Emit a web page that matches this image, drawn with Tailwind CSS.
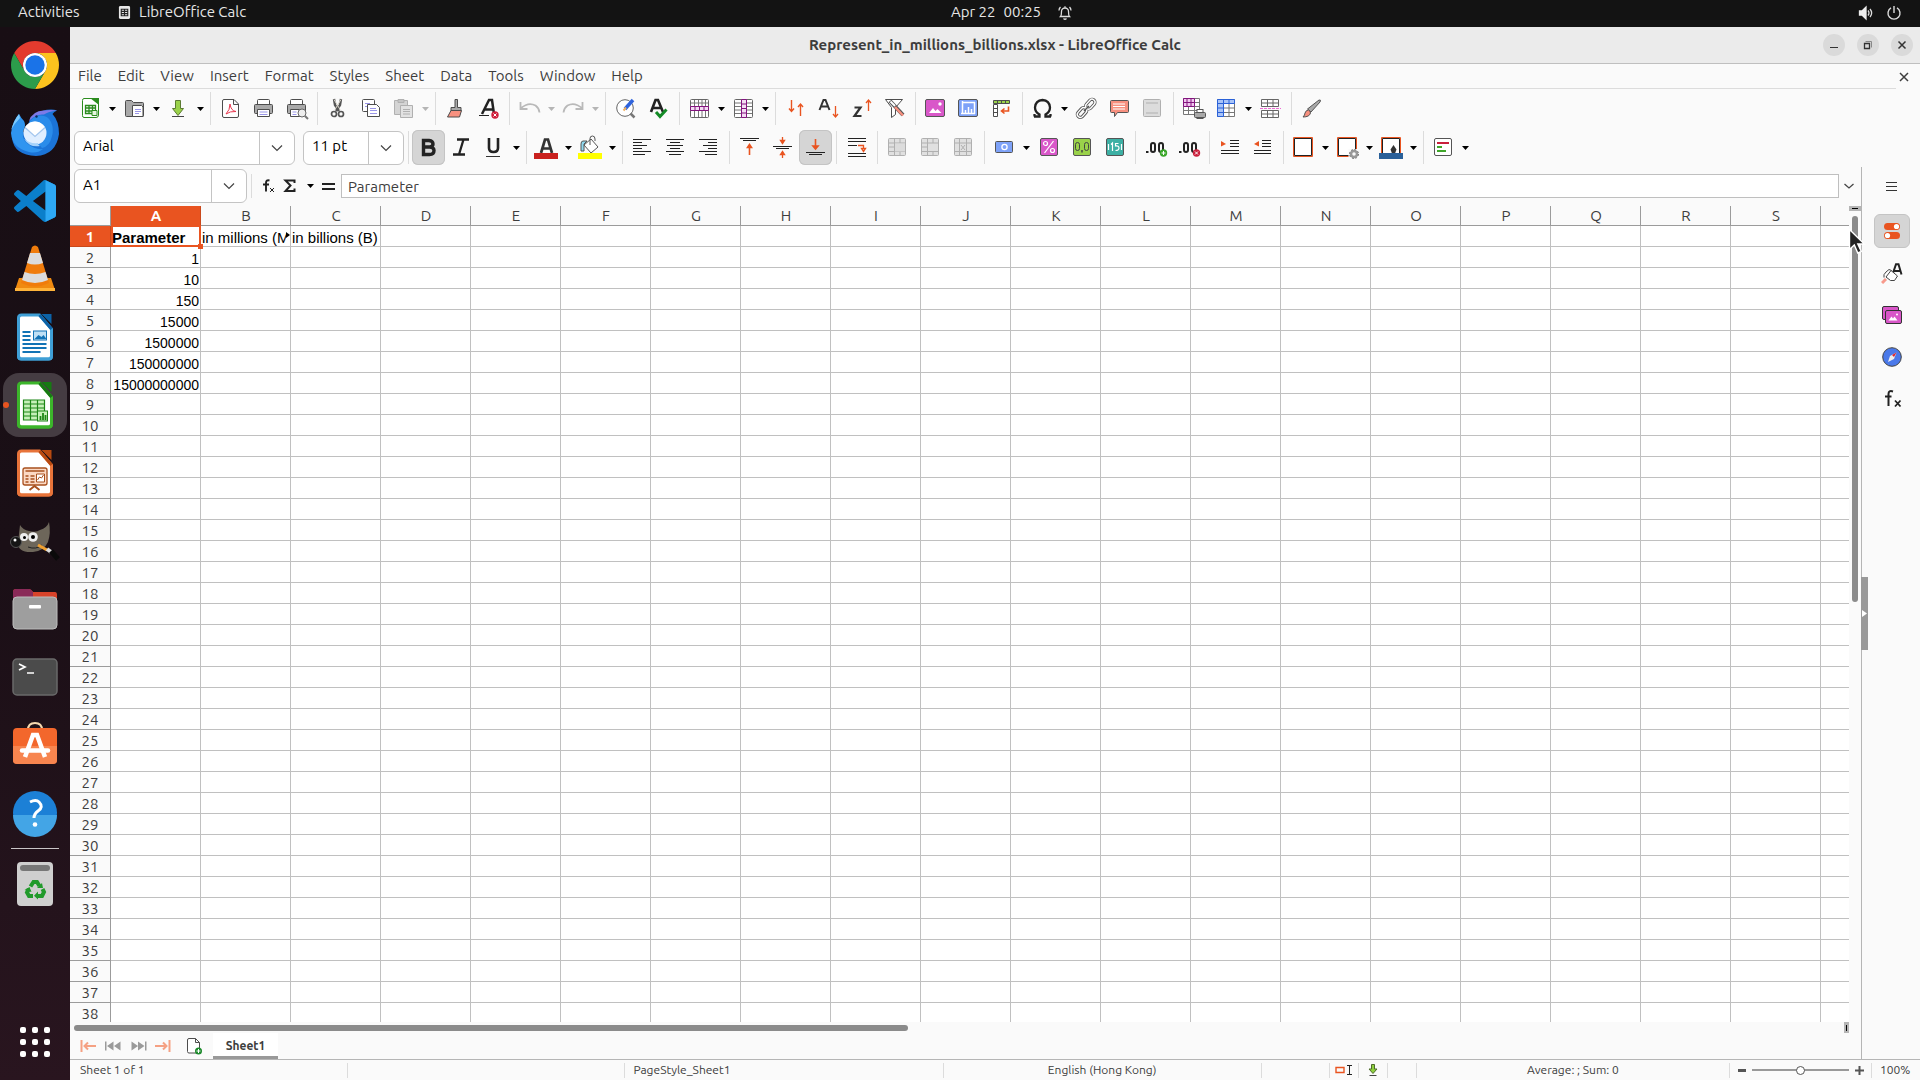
<!DOCTYPE html>
<html lang="en">
<head>
  <meta charset="UTF-8" />
  <meta name="viewport" content="width=device-width, initial-scale=1.0"/>
  <title>Represent_in_millions_billions.xlsx - LibreOffice Calc</title>

  <!-- Tailwind CSS CDN -->
  <script src="https://cdn.jsdelivr.net/npm/@tailwindcss/browser@4"></script>
</head>
<body class="h-screen overflow-hidden flex flex-col bg-[#fafafa] text-[#3d3d3d] text-[15px] font-['Ubuntu','Noto_Sans',sans-serif]">

  <!-- Desktop top bar -->
  <header class="h-[27px] shrink-0 bg-[#131313] text-[#e6e6e6] grid grid-cols-[1fr_auto_1fr] items-center pb-0.5">
    <div class="flex items-center pl-[18px]">
      <button class="w-[63px] text-left">Activities</button>
      <button class="flex items-center gap-2 ml-[37px]">
        <svg class="size-[13px]" viewBox="0 0 13 14"><rect x="0.500" width="12" height="14" rx="1.500" fill="#e8e8e8"/><path d="M3 3.500h7v7H3zM3 5.800h7M3 8.200h7M6.500 3.500v7" fill="none" stroke="#222" stroke-width="1.200"/></svg>
        LibreOffice Calc
      </button>
    </div>
    <button class="flex items-center gap-4 pl-[104px]">
      <span class="flex gap-2"><span>Apr 22</span><span>00:25</span></span>
      <svg class="size-4" viewBox="0 0 16 16" fill="none" stroke="#ddd" stroke-width="1.300"><path d="M3.500 11.500c1-1 1-2 1-5a3.500 3.500 0 0 1 7 0c0 3 0 4 1 5zM6.500 13.500q1.500 1.500 3 0M8 1.200v1.500M2 5.500q0-2 1.500-3.500M14 5.500q0-2-1.500-3.500"/></svg>
    </button>
    <div class="flex items-center justify-end gap-3 pr-[18px]">
      <svg class="size-4" viewBox="0 0 16 16" fill="none" stroke="#ddd" stroke-width="1.300"><path d="M1.500 6h2.500l4-4v12l-4-4H1.500z" fill="#eee" stroke="#eee"/><path d="M10 5.500q2 2.500 0 5M12 4q3.300 4 0 8" /></svg>
      <svg class="size-4" viewBox="0 0 16 16" fill="none" stroke="#ddd" stroke-width="1.400"><path d="M8 1v7M5 2.900a6 6 0 1 0 6 0"/></svg>
    </div>
  </header>

  <div class="flex flex-1 min-h-0">

    <!-- Dock -->
    <nav id="dock" aria-label="Dock" class="w-[70px] shrink-0 bg-linear-to-b from-[#180e14] via-[#1a0f16] to-[#29151f] pt-1 flex flex-col"></nav>

    <!-- Application window -->
    <div class="flex-1 min-w-0 flex flex-col">
      <div class="h-[37px] shrink-0 bg-[#ebebeb] border-b border-[#bfbfbf] grid grid-cols-[1fr_auto_1fr] items-center">
        <h1 class="col-start-2 font-bold">Represent_in_millions_billions.xlsx - LibreOffice Calc</h1>
        <div class="flex justify-end gap-3 pr-[7px]">
          <button aria-label="Minimize" class="size-[22px] rounded-full bg-[#dadada]"><svg viewBox="0 0 22 22" stroke="#333"><path d="M7 13.500h8"/></svg></button>
          <button aria-label="Restore" class="size-[22px] rounded-full bg-[#dadada]"><svg viewBox="0 0 22 22" stroke="#333" fill="none"><path d="M8.500 7.500h6v6" stroke="#888"/><path d="M7.500 9.500h5v5h-5z" stroke-width="1.300"/></svg></button>
          <button aria-label="Close" class="size-[22px] rounded-full bg-[#dadada]"><svg viewBox="0 0 22 22" stroke="#333" stroke-width="1.500"><path d="M7.500 7.500l7 7M14.500 7.500l-7 7"/></svg></button>
        </div>
      </div>

      <div class="h-[25px] shrink-0 flex">
        <div class="flex-1 flex items-center gap-4 pl-2 border-b border-[#dcdcdc]">
          <button>File</button><button>Edit</button><button>View</button><button>Insert</button><button>Format</button><button>Styles</button><button>Sheet</button><button>Data</button><button>Tools</button><button>Window</button><button>Help</button>
        </div>
        <button aria-label="Close document" class="w-6 pl-0.5"><svg class="size-3" viewBox="0 0 12 12" stroke="#3d3d3d" stroke-width="1.500"><path d="M2 2l8 8M10 2l-8 8"/></svg></button>
      </div>

      <div id="standardBar" class="h-[39px] shrink-0 flex items-center pl-1"></div>

      <div class="h-[39px] shrink-0 flex items-center pl-1">
        <div class="w-[221px] h-[34px] flex items-center bg-white border border-[#c4c4c4] rounded-md text-black">
          <select aria-label="Font name" class="appearance-none flex-1 h-full pl-2 pb-0.5 outline-none"><option>Arial</option></select>
          <span class="w-[35px] h-full border-l border-[#c4c4c4] grid place-items-center"><svg class="size-3" viewBox="0 0 12 12" fill="none" stroke="#444" stroke-width="1.200"><path d="M1 3.500l5 5 5-5"/></svg></span>
        </div>
        <div class="w-[101px] h-[34px] ml-2 flex items-center bg-white border border-[#c4c4c4] rounded-md text-black">
          <select aria-label="Font size" class="appearance-none flex-1 h-full pl-2 pb-0.5 outline-none"><option>11 pt</option></select>
          <span class="w-[35px] h-full border-l border-[#c4c4c4] grid place-items-center"><svg class="size-3" viewBox="0 0 12 12" fill="none" stroke="#444" stroke-width="1.200"><path d="M1 3.500l5 5 5-5"/></svg></span>
        </div>
        <div id="formatBar" class="flex items-center"></div>
      </div>

      <div class="flex flex-1 min-h-0">
        <main class="flex-1 min-w-0 flex flex-col">

          <!-- Formula bar -->
          <div class="h-[39px] shrink-0 flex items-center pl-1 pb-px">
            <div class="w-[173px] h-[34px] flex items-center bg-white border border-[#c4c4c4] rounded-md text-black">
              <select aria-label="Name box" class="appearance-none flex-1 h-full pl-2 pb-0.5 outline-none"><option>A1</option></select>
              <span class="w-[35px] h-full border-l border-[#c4c4c4] grid place-items-center"><svg class="size-3" viewBox="0 0 12 12" fill="none" stroke="#444" stroke-width="1.200"><path d="M1 3.500l5 5 5-5"/></svg></span>
            </div>
            <span class="w-px h-6 ml-1 bg-[#dcdcdc]"></span>
            <button aria-label="Function wizard" class="ml-[9px] w-5"><svg class="w-[17px] h-5" viewBox="0 0 17 20" fill="none" stroke="#222"><path d="M8.500 4.500q-3.500-1-3.500 2.500v8.500M2 8.500h6" stroke-width="1.900"/><path d="M9 12l4 4M13 12l-4 4"/></svg></button>
            <button aria-label="Select function" class="w-5"><svg class="w-4 h-5" viewBox="0 0 16 20" fill="none" stroke="#222" stroke-width="2"><path d="M13.500 7V4.500H4.500l5 5-5 5.500h9V12.500"/></svg></button>
            <span class="w-[18px] grid place-items-center"><svg class="w-[7px] h-1" viewBox="0 0 7 4"><path d="M0 0h7L3.500 4z"/></svg></span>
            <button aria-label="Formula" class="w-[22px]"><svg class="w-[18px] h-5" viewBox="0 0 18 20" stroke="#222" stroke-width="2"><path d="M3 8h13M3 13h13"/></svg></button>
            <input aria-label="Input line" value="Parameter" class="flex-1 h-6 bg-white border border-[#bfbfbf] pl-1.5 outline-none"/>
            <button aria-label="Expand formula bar" class="w-[22px] pr-0.5 grid place-items-center"><svg class="w-3 h-3" viewBox="0 0 12 12" fill="none" stroke="#444" stroke-width="1.300"><path d="M1.500 4l4.500 4 4.500-4"/></svg></button>
          </div>

          <!-- Sheet -->
          <div class="flex-1 min-h-0 flex overflow-hidden">
            <div class="flex-1 min-w-0 overflow-hidden bg-white">
              <table class="w-full table-fixed border-separate border-spacing-0 [&_th]:bg-[#fafafa] [&_th]:border-r [&_th]:border-b [&_th]:border-[#9b9b9b] [&_th]:p-0 [&_tbody_th]:h-[21px] [&_tbody_th]:pt-px [&_tbody_th]:leading-[19px] [&_thead_th]:h-5 [&_thead_th]:pt-px [&_thead_th]:pl-px [&_thead_th]:leading-[18px] [&_th]:font-normal [&_td]:h-[21px] [&_td]:border-r [&_td]:border-b [&_td]:border-[#c0c0c0] [&_td]:p-0 [&_td]:pt-1 [&_td]:px-px [&_td]:leading-4 [&_td]:whitespace-nowrap [&_td]:font-['Liberation_Sans',Arial,sans-serif] [&_td]:text-black [&_td:last-child]:border-r-0 [&_thead_th:last-child]:border-r-0">
                <colgroup id="cols"><col class="w-[41px]"></colgroup>
                <thead><tr id="letters"></tr></thead>
                <tbody id="rows"></tbody>
              </table>
            </div>
            <div class="w-3 shrink-0 flex flex-col items-center">
              <span class="w-full h-[5px] bg-[#b5b5b5] grid place-items-center"><span class="w-1.5 h-px bg-black"></span></span>
              <span class="w-1.5 h-[386px] mt-[5px] rounded-full bg-[#8b8b8b]"></span>
            </div>
          </div>

          <div class="h-[11px] shrink-0 flex items-start justify-between pl-1 pr-3">
            <span class="w-[47%] h-1.5 mt-[3px] rounded-full bg-[#8b8b8b]"></span>
            <span class="w-[5px] h-[11px] bg-[#b5b5b5] grid place-items-center"><span class="w-px h-1.5 bg-black"></span></span>
          </div>

          <!-- Sheet tabs -->
          <div class="h-[26px] shrink-0 flex items-center pl-2.5">
            <button aria-label="First sheet" class="w-[25px]"><svg class="size-4" viewBox="0 0 16 16" fill="none" stroke="#f5a183" stroke-width="2"><path d="M1.500 2v12M4 8h12M8 4.500L4.500 8 8 11.500"/></svg></button>
            <button aria-label="Previous sheet" class="w-[26px]"><svg class="size-4" viewBox="0 0 16 16" fill="#9a9a9a"><path d="M0 3.500h1.500v9H0zM8.500 3.500v9L2 8zM15.500 3.500v9L9 8z"/></svg></button>
            <button aria-label="Next sheet" class="w-6"><svg class="size-4" viewBox="0 0 16 16" fill="#9a9a9a"><path d="M14 3.500h1.500v9H14zM.5 3.500v9L7 8zM7 3.500v9L13.500 8z"/></svg></button>
            <button aria-label="Last sheet" class="w-[31px]"><svg class="size-4" viewBox="0 0 16 16" fill="none" stroke="#f5a183" stroke-width="2"><path d="M14.500 2v12M0 8h12M8 4.500L11.500 8 8 11.500"/></svg></button>
            <button aria-label="Add sheet" class="w-[27px]"><svg class="w-4 h-[18px]" viewBox="0 0 16 18"><path d="M3 1.500h6.500l4 4V14q0 2-2 2H3q-1.500 0-1.500-1.500V3Q1.500 1.500 3 1.500zM9.500 1.500v4h4" fill="#fff" stroke="#4d4d4d"/><circle cx="12.500" cy="14" r="3.500" fill="#1c8a2b"/><path d="M12.500 12v4M10.500 14h4" stroke="#fff"/></svg></button>
            <button class="w-[65px] h-full bg-white border-b-[3px] border-[#999] pt-0.5 text-xs font-bold">Sheet1</button>
          </div>
        </main>

        <!-- Sidebar -->
        <aside class="relative w-[59px] shrink-0 border-l border-[#b5b5b5] flex flex-col items-center gap-2 pt-0.5 pl-px">
          <button aria-label="Sidebar settings" class="w-9 h-[34px] grid place-items-center"><svg class="w-[11px] h-[11px]" viewBox="0 0 11 11" stroke="#333"><path d="M0 1.500h11M0 5.500h11M0 9.500h11"/></svg></button>
          <button aria-label="Properties" class="w-9 h-[34px] grid place-items-center bg-[#d5d5d5] border border-[#c4c4c4] rounded-md mt-[3px]"><svg class="size-5" viewBox="0 0 20 20"><rect x="2" y="2" width="16" height="7" rx="3.500" fill="#e95420"/><circle cx="14.500" cy="5.500" r="2.600" fill="#fff"/><rect x="2" y="11" width="16" height="7" rx="3.500" fill="#e95420"/><circle cx="5.500" cy="14.500" r="2.600" fill="#fff"/></svg></button>
          <button aria-label="Styles" class="w-9 h-[34px] grid place-items-center"><svg class="size-[22px]" viewBox="0 0 22 22" fill="none"><path d="M11.500 12.500L15 2.300h2.500L20.500 12.500M13 9h6.500" stroke="#222" stroke-width="2"/><path d="M1 21l4-4" stroke="#f79a8c" stroke-width="3"/><path d="M5 15l5-6.500 6.500 5.500-3 4.500h-4zM3 15.500q-1-3 2-5.500l3-2.500 2.500 1" fill="#fff" stroke="#444"/></svg></button>
          <button aria-label="Gallery" class="w-9 h-[34px] grid place-items-center"><svg class="size-5" viewBox="0 0 20 20"><rect x=".5" y="1.500" width="16" height="13" rx="1.500" fill="#d856c8" stroke="#333"/><rect x="3.500" y="5.500" width="16" height="13" rx="1.500" fill="#d856c8" stroke="#333"/><path d="M6.500 15.500l3-4 1.500 2 1.500-2 3 4z" fill="#fff"/><circle cx="15" cy="9.500" r="1" fill="#fff"/></svg></button>
          <button aria-label="Navigator" class="w-9 h-[34px] grid place-items-center"><svg class="size-5" viewBox="0 0 20 20"><circle cx="10" cy="10" r="9.300" fill="#4a79ea" stroke="#444"/><path d="M14.500 5.500L12 12l-6 3 2-6z" fill="#eee"/><path d="M14.500 5.500L12 10l-2-2z" fill="#d9232e"/></svg></button>
          <button aria-label="Functions" class="w-9 h-[34px] grid place-items-center"><svg class="size-5" viewBox="0 0 20 20" fill="none" stroke="#222" stroke-width="2"><path d="M11 2.500Q6.500 1 6.500 5v12M3 7.500h6.500"/><path d="M13 11.500l5.500 6M18.500 11.500l-5.500 6" stroke-width="1.800"/></svg></button>
          <!-- collapse handle -->
          <button aria-label="Hide sidebar" class="absolute -left-px top-[46%] w-[7px] h-[73px] bg-[#999] grid place-items-center"><svg class="w-[5px] h-[7px]" viewBox="0 0 5 7"><path d="M0 0v7l5-3.500z" fill="#fff"/></svg></button>
        </aside>
      </div>

      <!-- Status bar -->
      <footer class="h-[21px] shrink-0 border-t border-[#b5b5b5] flex items-center text-xs [&>div]:h-[15px] [&>div]:border-r [&>div]:border-[#dcdcdc] [&>div]:flex [&>div]:items-center">
        <div class="flex-[267] pl-2.5">Sheet 1 of 1</div>
        <div class="flex-[276]"></div>
        <div class="flex-[309] pl-2">PageStyle_Sheet1</div>
        <div class="flex-[317] justify-center">English (Hong Kong)</div>
        <div class="w-[68px]"></div>
        <div class="w-[29px] justify-center"><svg class="w-[18px] h-3" viewBox="0 0 18 12" fill="none"><path d="M1 3.500h8v5H1z" stroke="#e95420" stroke-width="1.400"/><path d="M12 1.500h5M14.500 1.500v9M12 10.500h5" stroke="#222"/></svg></div>
        <div class="w-[29px] justify-center"><svg class="size-3" viewBox="0 0 12 12"><path d="M4.500 .5h3v4.500h2.500L6 9.500 2 5h2.500z" fill="#8fd13f" stroke="#4d6b2a"/><path d="M2.500 11.500h7" stroke="#444"/></svg></div>
        <div class="w-[29px]"></div>
        <div class="flex-[312] justify-center">Average: ; Sum: 0</div>
        <div class="w-[142px] justify-center gap-1.5">
          <button aria-label="Zoom out" class="w-2 h-[3px] bg-[#555]"></button>
          <input type="range" aria-label="Zoom" value="50" class="appearance-none w-[97px] h-0.5 bg-[#999] [&::-webkit-slider-thumb]:appearance-none [&::-webkit-slider-thumb]:size-[9px] [&::-webkit-slider-thumb]:rounded-full [&::-webkit-slider-thumb]:bg-white [&::-webkit-slider-thumb]:border [&::-webkit-slider-thumb]:border-[#555]"/>
          <button aria-label="Zoom in"><svg class="size-[9px]" viewBox="0 0 9 9" stroke="#555" stroke-width="2"><path d="M0 4.500h9M4.500 0v9"/></svg></button>
        </div>
        <span class="w-12 pl-2">100%</span>
      </footer>
    </div>
  </div>

  <!-- mouse pointer -->
  <svg class="absolute left-[1848px] top-[228px] w-[18px] h-[27px] pointer-events-none" viewBox="0 0 18 27"><path d="M1.500 1.500v20l4.800-4.500 3.500 8 3.500-1.500-3.500-7.500h6.500z" fill="#222" stroke="#fff" stroke-width="1.400"/></svg>

  <script>
    const K = 'stroke="#4d4d4d"';
    const G = 'stroke="#b0b0b0"';
    const officeDoc = (dark, light, inner) =>
      `<g transform="translate(-1.500 0)"><path d="M14 3h17l12 14v27q0 3-3 3H13q-3 0-3-3V6q0-3 3-3z" fill="#fff" stroke="${light}" stroke-width="3"/><path d="M10 25v19q0 3 3 3h27q3 0 3-3V25" fill="none" stroke="${light}" stroke-width="3"/><path d="M31 3l12 14" stroke="${dark}" stroke-width="3"/><path d="M33 2h10v10z" fill="${dark}"/>${inner}</g>`;

    const dockApps = [
      ['Google Chrome', '<g transform="translate(1 1)"><path d="M24 12h20.780A24 24 0 0 0 3.220 12L13.600 30A12 12 0 0 1 24 12z" fill="#e33b2e"/><path d="M44.780 12A24 24 0 0 1 24 48L34.400 30A12 12 0 0 0 24 12z" fill="#fcc31e"/><path d="M24 48A24 24 0 0 1 3.220 12L13.600 30A12 12 0 0 0 34.400 30z" fill="#2c9c4b"/><circle cx="24" cy="24" r="12" fill="#fff"/><circle cx="24" cy="24" r="9.700" fill="#1a73e8"/></g>'],
      ['Thunderbird', '<path d="M17 22Q19 6 32 3q9-2.500 15-.5-3 1-4.500 3.500Q49 13 49 26 46 47 26 48 4 47 2 30z" fill="#1b74d8"/><path d="M19 13Q22 3 34 2.500q7-1 13 0-9 1-13 4-8-1-15 6.500z" fill="#7c7ae8"/><path d="M17 22q1-11 10-14 10-2 14 6 3 7 1 14-2 10-10 12" fill="#2a8cea"/><path d="M1 25Q3 12 9 6q2 4 5 7 2 4 0 8-4 9 4 15 7 6 15 5-6 5-14 3Q2 40 1 25z" fill="#2f95f0"/><path d="M1 22Q4 12 9 6l1 4Q4 16 1 22z" fill="#7ccbff"/><circle cx="25" cy="25" r="11.500" fill="#dfeeff"/><path d="M15 19.500l10 9 10-9q-4-6-10-6t-10 6z" fill="#fff"/><path d="M15 19.500l10 9 10-9" fill="none" stroke="#a3c6ee" stroke-width="1.300"/><path d="M14 31q6 9 16 7-2-1-2-3-8 1-14-4z" fill="#a5d2fa"/><circle cx="26.500" cy="8.500" r="1.200" fill="#0c2b5e"/>'],
      ['Visual Studio Code', '<g transform="translate(4 4) scale(1.750)"><path d="M23.150 2.587L18.210.210a1.494 1.494 0 0 0-1.705.290l-9.460 8.630-4.120-3.128a.999.999 0 0 0-1.276.057L.327 7.261A1 1 0 0 0 .326 8.740L3.899 12 .326 15.260a1 1 0 0 0 .001 1.479L1.650 17.940a.999.999 0 0 0 1.276.057l4.120-3.128 9.460 8.630a1.492 1.492 0 0 0 1.704.290l4.942-2.377A1.500 1.500 0 0 0 24 20.060V3.939a1.500 1.500 0 0 0-.850-1.352zm-5.146 14.861L10.826 12l7.178-5.448v10.896z" fill="#0b7fcb"/><path d="M18 .2l5.200 2.400q.8.500.8 1.400v16q0 .9-.8 1.400L18 23.800z" fill="#2ea8f4"/></g>'],
      ['VLC media player', '<path d="M9 34h32l4 12H5z" fill="#f08a10"/><path d="M5 44h40v3H5z" fill="#ffb43a"/><path d="M22 3q3-3 6 0l11 36q-14 7-28 0z" fill="#f07c0c"/><path d="M20 9h10l3 10q-8 3-16 0zM14.500 28q10.500 4 21 0l2.500 8q-13 6-26 0z" fill="#dcdcdc"/>'],
      ['LibreOffice Writer', officeDoc('#0c63a8', '#3f9fd6', '<path d="M14 20h8M14 24h8M14 28h8M14 32h24M14 36h24M14 40h18" stroke="#1273b5" stroke-width="2"/><rect x="25" y="19" width="13" height="9" fill="#bfe0f5" stroke="#1273b5"/><path d="M26 27l4-4 3 2 2-2 3 4z" fill="#1273b5"/>')],
      ['LibreOffice Calc', officeDoc('#167a12', '#3cb52b', '<rect x="15" y="20" width="21" height="20" fill="#c6f0b8"/><path d="M15 20h21v20H15zM15 24h21M15 28h21M15 32h21M15 36h21M22 20v20M29 20v20" fill="none" stroke="#1d8516" stroke-width="1.200"/><rect x="29" y="31" width="10" height="10" fill="#c6f0b8" stroke="#1d8516"/><path d="M32 40v-4M34.500 40v-7M37 40v-5" stroke="#1d8516" stroke-width="1.800"/>')],
      ['LibreOffice Impress', officeDoc('#b84a10', '#e8743a', '<rect x="14.500" y="20" width="24" height="17" rx="2" fill="#fbd9c4" stroke="#a8501e" stroke-width="1.300"/><path d="M21 42l5-4 5 4" fill="none" stroke="#a8501e" stroke-width="2"/><path d="M17 23h19M17 28h3M22 28h4M17 31h3M22 31h4M17 34h3M22 34h4" stroke="#a8501e" stroke-width="1.500"/><path d="M28 26h8v8h-8z" fill="#fff" stroke="#a8501e"/><path d="M29 32l2-3 2 1 2-3" fill="none" stroke="#a8501e"/>')],
      ['GIMP', '<path d="M10 9q3 5 9 6 7 2 11-1 7-2 9-8 2 11-1 20-4 9-15 10Q8 37 8 27z" fill="#6d665a"/><circle cx="6" cy="26" r="5.500" fill="#151515" stroke="#555"/><circle cx="5" cy="24" r="1.500" fill="#fff"/><circle cx="14" cy="21" r="4" fill="#eee"/><circle cx="14.500" cy="21.500" r="1.500"/><circle cx="23" cy="21" r="4.800" fill="#eee"/><circle cx="23" cy="21" r="2"/><path d="M18 31q8 3 14-2" stroke="#222" fill="none"/><path d="M28 29l9 5" stroke="#f0a030" stroke-width="3"/><path d="M37 33l4 3" stroke="#ddd" stroke-width="4"/><path d="M41 35l7 8" stroke="#0a0a0a" stroke-width="5"/>'],
      ['Files', '<path d="M3 8q0-3 3-3h13q2 0 4 3h22q2 0 2 3v10H3z" fill="#d8432a"/><path d="M3 8q0-3 3-3h13q2 0 4 3v8H3z" fill="#8a2a58"/><rect x="3" y="13" width="44" height="32" rx="4" fill="#9e9e9e" stroke="#bdbdbd"/><rect x="19" y="21" width="12" height="3.500" rx="1" fill="#fff"/>'],
      ['Terminal', '<rect x="3" y="7" width="44" height="36" rx="4" fill="#4b4b4b" stroke="#6a6a6a" stroke-width="1.500"/><path d="M9 12l6 3-6 3M17 21h7" fill="none" stroke="#fff" stroke-width="1.700"/>'],
      ['Ubuntu Software', '<path d="M18 10q0-7 7-7t7 7" fill="none" stroke="#f6d9b0" stroke-width="2"/><rect x="3" y="8" width="44" height="36" rx="4" fill="#f3672c"/><path d="M3 26h44v14q0 4-4 4H7q-4 0-4-4z" fill="#f7854f"/><path d="M15 37l8-22h4l8 22" fill="none" stroke="#fff" stroke-width="4.500"/><path d="M12 30.500h26" stroke="#fff" stroke-width="4.500" stroke-linecap="round"/>'],
      ['Help', '<circle cx="25" cy="25" r="22" fill="#1c80d6"/><path d="M3 27a22 22 0 0 0 44 0z" fill="#43a5e6"/><path d="M20 14q6-3 9 0 5 5-1 9-4 3-4 7" fill="none" stroke="#fff" stroke-width="3"/><circle cx="25" cy="36.500" r="2.300" fill="#fff"/>'],
    ];

    const dock = document.getElementById('dock');
    const dockButton = ([name, art]) => {
      const active = name === 'LibreOffice Calc';
      return `<button aria-label="${name}" class="relative h-[68px] w-full grid place-items-center shrink-0">
        ${active ? '<span class="absolute inset-x-[3px] inset-y-0.5 rounded-2xl bg-[#453c42]"></span><span class="absolute left-[3px] size-1.5 rounded-full bg-[#e95420]"></span>' : ''}
        <svg class="relative size-[50px]" viewBox="0 0 50 50">${art}</svg></button>`;
    };
    dock.innerHTML = dockApps.map(dockButton).join('') +
      '<span class="w-12 h-px my-px mx-auto bg-[#c9c5c7] shrink-0"></span>' +
      dockButton(['Trash', '<rect x="7" y="3" width="36" height="44" rx="4" fill="#cfcfcf"/><rect x="10" y="6" width="30" height="6" rx="3" fill="#777"/><g fill="none" stroke="#219a2b" stroke-width="4"><path d="M20.500 27.500l3-4.500h3.500l2.500 4"/><path d="M32.500 30l1.500 3-2 4h-5"/><path d="M23 37h-4l-2-3.500 1.800-3.500"/></g><path d="M27 29l6 0-1-5zM28 32.500v8L24 36.800zM14.500 31l5-3 2 5z" fill="#219a2b"/>']) +
      '<button aria-label="Show applications" class="mt-auto mb-[23px] mx-auto grid grid-cols-3 gap-1.5">' +
      '<i class="size-1.5 rounded-xs bg-white"></i>'.repeat(9) + '</button>';

    // toolbar icons are drawn on a 25x25 grid
    const icons = {
      new: '<path d="M6 2.500h9l5.500 5V19q0 2.500-2.500 2.500H6q-1.500 0-1.500-2V4.500q0-2 1.500-2z" fill="#fff" stroke="#2b8c1e"/><path d="M12 2h9v7z" fill="#2b8c1e"/><path d="M7.500 9.500h10v8h-10zM7.500 12h10M7.500 15h10M11 9.500v8M14.500 9.500v8" fill="none" stroke="#2b8c1e" stroke-width="1.300"/><path d="M14 14.500h5v5h-5z" fill="#e5f7df" stroke="#2b8c1e"/>',
      open: `<path d="M4.500 20.500q-1 0-1-1v-14q0-1 1-1h5l2 2h9q1 0 1 1v12q0 1-1 1z" fill="#a9a9a9" ${K}/><path d="M10.500 9.500h9l1.500 1.500v9.500h-10.500z" fill="#fff" ${K}/><path d="M13 13.500h6M13 15.500h6M13 17.500h4" stroke="#9a96e8"/>`,
      save: '<path d="M9.500 4.500h5v8h3l-5.500 7-5.500-7h3z" fill="#9ad24a" stroke="#5c7b32"/><path d="M6 20.500h12" stroke="#444"/>',
      pdf: `<path d="M6 3.500h10l4.500 4.500v12q0 1.500-1.500 1.500H6q-1.500 0-1.500-1.500V5Q4.500 3.500 6 3.500zM15.500 3.500v5h5" fill="#fff" ${K}/><path d="M8 18q4-4 4-10 1 7 6 7.500-6-.5-10 2.500z" fill="none" stroke="#e8384f"/>`,
      print: `<rect x="6.500" y="3.500" width="12" height="6" rx="1" fill="#fff" ${K}/><rect x="3.500" y="8.500" width="18" height="9" rx="1" fill="#a9a9a9" ${K}/><path d="M6.500 13.500h12v7h-12z" fill="#fff" ${K}/><path d="M8.500 16h8M8.500 18.500h8" stroke="#9a96e8"/>`,
      preview: `<rect x="6.500" y="3.500" width="12" height="6" rx="1" fill="#fff" ${K}/><rect x="3.500" y="8.500" width="18" height="9" rx="1" fill="#a9a9a9" ${K}/><path d="M6.500 13.500h12v7h-12z" fill="#fff" ${K}/><path d="M8.500 16h4M8.500 18.500h4" stroke="#9a96e8"/><circle cx="18" cy="17" r="4" fill="#eee" stroke="#666"/><path d="M21 20l3 3" stroke="#777" stroke-width="2"/>`,
      cut: '<path d="M9 3l1 6 4 6M16 3l-1 6-4 6" fill="none" stroke="#555" stroke-width="2.400"/><path d="M9 3.500l6 10M16 3.500l-6 10" stroke="#d8d4c8"/><circle cx="9" cy="18" r="2.500" fill="none" stroke="#555" stroke-width="1.700"/><circle cx="16" cy="18" r="2.500" fill="none" stroke="#555" stroke-width="1.700"/>',
      copy: `<rect x="4.500" y="3.500" width="12" height="12" rx="1" fill="#fff" ${K}/><path d="M7 7.500h5M7 10.500h3" stroke="#9a96e8"/><path d="M9.500 8.500h9l3 3v9h-12z" fill="#fff" ${K}/><path d="M12 12.500h6M12 14.500h7M12 17.500h7" stroke="#9a96e8"/>`,
      paste: `<path d="M3.500 4.500h13v14h-13z" fill="#d4d4d4" ${G}/><path d="M7 3.500h6v3H7z" fill="#c4c4c4" ${G}/><path d="M9.500 9.500h12v12h-12z" fill="#e2e2e2" ${G}/><path d="M12 13.500h7M12 15.500h7M12 18h7" ${G}/>`,
      clone: `<path d="M12 3.500h2.500v8h3.500v4H8v-4h4z" fill="#a9a9a9" ${K}/><path d="M8 14.500h10.500l-2 6.500h-12z" fill="#f7907f" ${K}/>`,
      clear: '<path d="M6 18L13 4h3l2 14M9 13.500h8" fill="none" stroke="#222" stroke-width="2.500"/><path d="M3 19.500h10" stroke="#222"/><circle cx="19" cy="19" r="3.700" fill="#d01f3c"/><path d="M17.500 17.500l3 3M20.500 17.500l-3 3" stroke="#fff"/>',
      undo: '<path d="M3.500 6v7h7M3.500 12.500q8-7 15-3 3.500 2.500 4 7" fill="none" stroke="#b9b9b9" stroke-width="1.800"/>',
      redo: '<path d="M21.500 6v7h-7M21.500 12.500q-8-7-15-3-3.500 2.500-4 7" fill="none" stroke="#b9b9b9" stroke-width="1.800"/>',
      find: '<circle cx="12" cy="12" r="8.300" fill="#fff" stroke="#666"/><path d="M17.500 17.500l4 4" stroke="#777" stroke-width="2.500"/><path d="M12 13l8-9" stroke="#2f63dc" stroke-width="3.500"/><path d="M10.500 14.500l2.500-3" stroke="#f0b060" stroke-width="2"/>',
      spell: '<path d="M5 16L9.500 4h2.500l5 12M7 12h8" fill="none" stroke="#222" stroke-width="2.600"/><path d="M10 16l4 4.500 6.500-7" fill="none" stroke="#148a26" stroke-width="3"/>',
      row: '<rect x="3.500" y="3.500" width="18" height="18" rx="1" fill="#fff" stroke="#666"/><path d="M7.500 4v17M11.500 4v17M15 4v17M18.500 4v17M4 7h17" stroke="#777"/><path d="M3.500 10.500h18v4h-18z" fill="#f3dcf3" stroke="#83157e"/><path d="M8 10.500v4M12.500 10.500v4M17 10.500v4" stroke="#83157e"/>',
      col: '<rect x="3.500" y="3.500" width="18" height="18" rx="1" fill="#fff" stroke="#666"/><path d="M4 7h17M4 10.500h17M4 14h17M4 17.500h17" stroke="#777"/><path d="M10.500 3.500h5v18h-5z" fill="#f3dcf3" stroke="#83157e"/><path d="M10.500 8h5M10.500 12.500h5M10.500 17h5" stroke="#83157e"/>',
      sort: '<path d="M8.500 4v11M6 12.500l2.500 3 2.500-3M17.500 20V9M15 11l2.500-3L20 11" fill="none" stroke="#e95420" stroke-width="1.400"/>',
      asc: '<path d="M3.500 14L7.500 4h2l4 10M5.500 10.500h6" fill="none" stroke="#333" stroke-width="2"/><path d="M19.500 10v10M17 18l2.500 3 2.500-3" fill="none" stroke="#e95420" stroke-width="1.300"/>',
      desc: '<path d="M5.500 11.500h6l-6 8.500h7" fill="none" stroke="#333" stroke-width="2.200"/><path d="M19.500 15V4M17 7l2.500-3L22 7" fill="none" stroke="#e95420" stroke-width="1.300"/>',
      filter: `<path d="M3.500 3.500h17l-7 8v7l-4 3v-10z" fill="#fff" ${K}/><path d="M8 5l13 14" stroke="#555" stroke-width="4"/><path d="M8.500 5.500L13 10" stroke="#fff" stroke-width="2"/><path d="M13 11l8 8.500" stroke="#f7907f" stroke-width="2.500"/>`,
      image: '<rect x="2.500" y="3.500" width="19" height="17" rx="1.500" fill="#d957c9" stroke="#555"/><path d="M6 17l4-5 2.500 3 2-2 4 4z" fill="#fff"/><circle cx="17" cy="8" r="1.700" fill="#fff"/>',
      chart: '<rect x="2.500" y="3.500" width="19" height="17" rx="1.500" fill="#7ea2f8" stroke="#555"/><path d="M6.500 5v13M5 17.500h14M6 6.500h13M18.500 6v12M9.500 17v-3M12.500 17v-6M15.500 17v-4" fill="none" stroke="#fff" stroke-width="1.500"/>',
      pivot: `<path d="M4.500 4.500h16v3h-16z" fill="#9ad24a" ${K}/><path d="M8.500 4.500v3M12.500 4.500v3M16.500 4.500v3" ${K}/><path d="M4.500 8.500h4v12h-4zM4.500 12.500h4M4.500 16.500h4" fill="#fff" ${K}/><path d="M19.500 10.500v4.500h-6M15.500 12.500l-3 2.500 3 2.500" fill="none" stroke="#e95420" stroke-width="1.600"/>`,
      omega: '<path d="M4 20.500h5.500v-2Q5 16 5 11.500 5.500 4.500 12.500 4q7 .5 7.500 7.500 0 4.500-4.500 7v2H21M4.500 20.500V18M20.500 20.500V18" fill="none" stroke="#222" stroke-width="2.300"/>',
      link: '<g fill="none" stroke="#555" stroke-width="3.200"><rect x="11" y="5.500" width="11" height="6" rx="3" transform="rotate(-48 16 8.500)"/><rect x="2.500" y="13.500" width="11" height="6" rx="3" transform="rotate(-48 8 16.500)"/></g><g fill="none" stroke="#fff" stroke-width="1.400"><rect x="11" y="5.500" width="11" height="6" rx="3" transform="rotate(-48 16 8.500)"/><rect x="2.500" y="13.500" width="11" height="6" rx="3" transform="rotate(-48 8 16.500)"/></g><path d="M10 15l5-5" stroke="#555" stroke-width="1.500"/>',
      comment: '<path d="M4.500 4.500h16q1 0 1 1v10q0 1-1 1h-10l-3 4v-4h-3q-1 0-1-1v-10q0-1 1-1z" fill="#f7907f" stroke="#555"/><path d="M6 8h12M6 10.500h12M6 13h12" stroke="#fff"/>',
      header: `<rect x="3.500" y="3.500" width="17" height="17" rx="1" fill="#dcdcdc" ${G}/><path d="M6 7h12M6 17h12" ${G}/>`,
      area: '<path d="M2.500 2.500h16v16h-16zM2.500 6.500h16M2.500 10.500h16M2.500 14.500h16M7.500 2.500v16M13.500 2.500v16" fill="#fff" stroke="#777"/><path d="M2.500 2.500h11v8h-11z" fill="#f0c8ee" stroke="#83157e"/><path d="M6 2.500v8M10 2.500v8M2.500 6.500h11" stroke="#83157e"/><rect x="16" y="13.500" width="6" height="9" fill="#fff" stroke="#555"/><rect x="13.500" y="16.500" width="11" height="5" rx="1" fill="#a9a9a9" stroke="#555"/>',
      freeze: '<path d="M3.500 3.500h17v17h-17zM4 7.500h17M4 12h17M4 16.500h17M9.500 4v17M15 4v17" fill="#fff" stroke="#777"/><path d="M3.500 20.500v-17h17v4h-11v13z" fill="#a9c4f8" stroke="#2b62d8"/><path d="M3.500 7.500h6M3.500 12h6M3.500 16.500h6M9.500 3.500v4M15 3.500v4" stroke="#2b62d8"/>',
      split: '<path d="M3.500 3.500h17v7h-17zM3.500 7h17M9.500 3.500v7M15 3.500v7M3.500 14.500h17v7h-17zM3.500 18h17M9.500 14.500v7M15 14.500v7" fill="#fff" stroke="#666"/><path d="M2 12.500h21" stroke="#ee6bd6" stroke-dasharray="3 1"/>',
      brush: '<path d="M20 4q2.500-.5 1 2l-9 10-3.500-3z" fill="#a9a9a9" stroke="#555"/><path d="M4 21q2-2 2-4 1-3 3.500-3 2 1 2 3-1 4-7.500 4z" fill="#f7907f" stroke="#555"/>',
      bold: '<path d="M7.500 5.500h5.500q4 .5 4 3.500 0 2.500-3 3 4 .5 4 3.500 0 4-4.500 4h-6zM8 12h6" fill="none" stroke="#222" stroke-width="3.400"/>',
      italic: '<path d="M8 4.500h12M4 19.500h12M14.500 4.500l-4.500 15" fill="none" stroke="#222" stroke-width="2.300"/>',
      underline: '<path d="M7 3v10q0 4 4.500 4t4.500-4V3" fill="none" stroke="#222" stroke-width="2.600"/><path d="M4 21.500h14" stroke="#333"/>',
      color: '<path d="M7 18L11 4.500h3L18 18M9 13.500h7" fill="none" stroke="#333" stroke-width="2.700"/><rect x="0" y="18" width="24" height="6" fill="#c9211e"/>',
      fill: '<path d="M9 6H5q-2 0-2 3v7h3V9z" fill="#8fd8ef" stroke="#555"/><path d="M6 10l7-6 7 8-7 6z" fill="#fff" stroke="#555"/><path d="M12 10V3.500q0-2.500 2.500-2.500t2.500 3v2" fill="none" stroke="#555"/><rect x="0" y="18" width="24" height="6" fill="#ff0"/>',
      left: '<path d="M3 4.500h18M3 7.500h9M3 10.500h14M3 13.500h9M3 16.500h18M3 19.500h12" stroke="#222"/>',
      center: '<path d="M3 4.500h18M7 7.500h10M4 10.500h16M7 13.500h10M3 16.500h18M6 19.500h12" stroke="#222"/>',
      right: '<path d="M3 4.500h18M12 7.500h9M7 10.500h14M12 13.500h9M3 16.500h18M9 19.500h12" stroke="#222"/>',
      top: '<path d="M3 3.500h19M6 5.500h13" stroke="#222"/><path d="M12.500 20v-8M10.500 12.500h4l-2-3z" fill="#e95420" stroke="#e95420" stroke-width="1.600"/>',
      middle: '<path d="M3 11.500h19M6 13.500h13" stroke="#222"/><path d="M12.500 2v3M10.500 5.500h4l-2 3zM12.500 23v-3M10.500 19.500h4l-2-3z" fill="#e95420" stroke="#e95420" stroke-width="1.300"/>',
      bottom: '<path d="M3 17.500h19M6 19.500h13" stroke="#222"/><path d="M12.500 4v8M10 11h5l-2.500 3z" fill="#e95420" stroke="#e95420" stroke-width="1.600"/>',
      wrap: '<path d="M4 3.500h18M4 6.500h18M4 10.500h9M4 18.500h18M4 21.500h18" stroke="#222"/><path d="M14 10.500h5.500v4M17.500 13.500h4l-2 3z" fill="none" stroke="#e95420" stroke-width="1.300"/>',
      merge: `<rect x="3.500" y="3.500" width="17" height="17" rx="1" fill="#e0e0e0" ${G}/><path d="M9.500 4v17M3.500 8h17M3.500 12h17M3.500 16.500h17M15 4v4M15 16v5" ${G}/><rect x="10" y="8.500" width="10" height="8" fill="#dcdcdc"/>`,
      split2: `<rect x="3.500" y="3.500" width="17" height="17" rx="1" fill="#e0e0e0" ${G}/><path d="M9.500 4v17M3.500 8h17M3.500 16.500h17M15 4v4M15 16v5M3.500 12h6" ${G}/>`,
      mergec: `<rect x="3.500" y="3.500" width="17" height="17" rx="1" fill="#e0e0e0" ${G}/><path d="M8.500 4v17M15.500 4v17M3.500 8h17M3.500 16.500h17M10 10l4 5M14 10l-4 5" ${G}/>`,
      currency: '<rect x="3.500" y="6.500" width="17" height="11" rx="1" fill="#7ea2f8" stroke="#555"/><circle cx="12.500" cy="12" r="2.600" fill="none" stroke="#fff" stroke-width="1.300"/>',
      percent: '<rect x="4.500" y="3.500" width="17" height="17" rx="1.500" fill="#d957c9" stroke="#555"/><g fill="none" stroke="#fff" stroke-width="1.200"><circle cx="9.500" cy="8.500" r="2"/><circle cx="16.500" cy="15.500" r="2"/><path d="M17.500 6l-9 12"/></g>',
      number: '<rect x="4.500" y="3.500" width="17" height="17" rx="1.500" fill="#9ad24a" stroke="#555"/><g fill="none" stroke="#444"><rect x="6.500" y="7.500" width="4" height="8" rx="2"/><rect x="15.500" y="7.500" width="4" height="8" rx="2"/><path d="M13 15v2.500" stroke-width="1.500"/></g>',
      date: '<rect x="4.500" y="3.500" width="17" height="17" rx="1.500" fill="#3db0a4" stroke="#555"/><path d="M6.500 9v6M19.500 9v6M9 9.500l1.500-1.500v8M16.500 8.500h-3V11q3.500-.5 3.500 2t-3.500 2.500" fill="none" stroke="#fff" stroke-width="1.200"/>',
      adddec: '<g fill="none" stroke="#222" stroke-width="2"><rect x="8" y="8" width="4" height="9" rx="2"/><rect x="16" y="8" width="4" height="9" rx="2"/><path d="M3 17h2.500"/></g><circle cx="20.500" cy="18" r="3.700" fill="#3aa62a"/><path d="M20.500 16v4M18.500 18h4" stroke="#fff"/>',
      deldec: '<g fill="none" stroke="#222" stroke-width="2"><rect x="8" y="8" width="4" height="9" rx="2"/><rect x="16" y="8" width="4" height="9" rx="2"/><path d="M3 17h2.500"/></g><circle cx="20.500" cy="18" r="3.700" fill="#c9203c"/><path d="M19 16.500l3 3M22 16.500l-3 3" stroke="#fff"/>',
      indent: '<path d="M13 5.500h9M13 8.500h9M13 11.500h9M4 15.500h18M4 18.500h18" stroke="#222"/><path d="M4 6v5.500L9 9z" fill="#e95420"/>',
      outdent: '<path d="M12 5.500h9M12 8.500h9M12 11.500h9M4 15.500h17M4 18.500h17" stroke="#222"/><path d="M9 6v5.500L4 9z" fill="#e95420"/>',
      borders: '<path d="M2.500 2.500h19v19h-19z" fill="#fff" stroke="#e95420"/><path d="M3.500 3.500h17v17h-17z" fill="none" stroke="#222"/>',
      style: '<path d="M2.500 2.500h19v19h-19z" fill="#fff" stroke="#e95420"/><path d="M3.500 3.500h17v17h-17z" fill="none" stroke="#222"/><rect x="13.500" y="14" width="11" height="11" fill="#fafafa"/><circle cx="19" cy="19" r="3" fill="none" stroke="#999" stroke-width="2.500"/><circle cx="19" cy="19" r="4.500" fill="none" stroke="#777" stroke-dasharray="2 1.500"/>',
      bcolor: '<path d="M2.500 2.500h19v19h-19z" fill="#fff" stroke="#e95420"/><path d="M3.500 3.500h17v17h-17z" fill="none" stroke="#222"/><path d="M14.500 10l3 4.500-1.500 4h-3L11.500 14.500z" fill="#333"/><rect x="0" y="18" width="24" height="6" fill="#2a6099"/>',
      cond: '<rect x="3.500" y="3.500" width="17" height="17" rx="1.500" fill="#fff" stroke="#555"/><path d="M6 8h12" stroke="#c9203c" stroke-width="2"/><path d="M6 12h5M6 16h9" stroke="#3fa62a" stroke-width="2"/>',
    };

    // "|" is a separator, "v" a drop-down arrow, "w" a disabled one
    const standard = 'new v open v save v | pdf print preview | cut copy paste w | clone clear | undo w redo w | find spell | row v col v | sort asc desc filter | image chart pivot | omega v link comment header | area freeze v split | brush';
    const format = 'bold italic underline v | color v fill v | left center right | top middle bottom | wrap | merge split2 mergec | currency v percent number date | adddec deldec | indent outdent | borders v style v bcolor v | cond v';

    function toolbar(names) {
      return names.split(' ').map(name => {
        if (name === '|') return '<span class="w-2 h-[33px] flex justify-center"><span class="w-px h-full bg-[#dcdcdc]"></span></span>';
        if (name === 'v' || name === 'w') {
          return `<button aria-label="More options" class="w-[11px] grid place-items-center"><svg class="w-[7px] h-1" viewBox="0 0 7 4"><path d="M0 0h7L3.500 4z" fill="${name === 'v' ? '#000' : '#b5b5b5'}"/></svg></button>`;
        }
        const pressed = name === 'bold' || name === 'bottom';
        return `<button aria-label="${name}" class="${pressed ? 'w-[33px] h-[35px] grid place-items-center rounded-md bg-[#d5d5d5] ring-1 ring-inset ring-[#c4c4c4]' : 'w-[33px] h-[35px] grid place-items-center'}"><svg class="size-[25px]" viewBox="0 0 25 25">${icons[name]}</svg></button>`;
      }).join('');
    }
    document.getElementById('standardBar').innerHTML = toolbar(standard);
    document.getElementById('formatBar').innerHTML = toolbar('| ' + format);

    // sheet data
    const values = ['Parameter', 1, 10, 150, 15000, 1500000, 150000000, 15000000000];
    const letters = 'ABCDEFGHIJKLMNOPQRS'.split('');

    document.getElementById('cols').innerHTML += '<col class="w-[90px]">'.repeat(letters.length) + '<col>';
    document.getElementById('letters').innerHTML = '<th></th>' + letters.map(l =>
      l === 'A' ? '<th class="bg-[#e95420]! border-[#c9481b]! font-bold! text-white">A</th>' : `<th>${l}</th>`).join('') + '<th></th>';

    let html = '';
    for (let r = 1; r <= 38; r++) {
      html += r === 1 ? '<tr><th class="bg-[#e95420]! border-[#c9481b]! font-bold! text-white">1</th>' : `<tr><th>${r}</th>`;
      for (let c = 0; c <= letters.length; c++) {
        if (r === 1 && c === 0) {
          html += '<td class="relative font-bold">Parameter<span class="absolute -inset-px left-0 border-2 border-[#e95420]"></span><span class="absolute -right-[3px] -bottom-[3px] size-[5px] bg-[#e95420] z-10"></span></td>';
        } else if (r === 1 && c === 1) {
          html += '<td class="relative overflow-hidden">in millions (M)<span class="absolute right-0 top-1 w-1 h-4 bg-white"><svg class="w-1 h-3" viewBox="0 0 4 12"><path d="M0 2v6l4-3z"/></svg></span></td>';
        } else if (r === 1 && c === 2) {
          html += '<td>in billions (B)</td>';
        } else if (c === 0 && r <= values.length) {
          html += `<td class="text-right text-sm">${values[r - 1]}</td>`;
        } else {
          html += '<td></td>';
        }
      }
      html += '</tr>';
    }
    document.getElementById('rows').innerHTML = html;
  </script>
</body>
</html>
